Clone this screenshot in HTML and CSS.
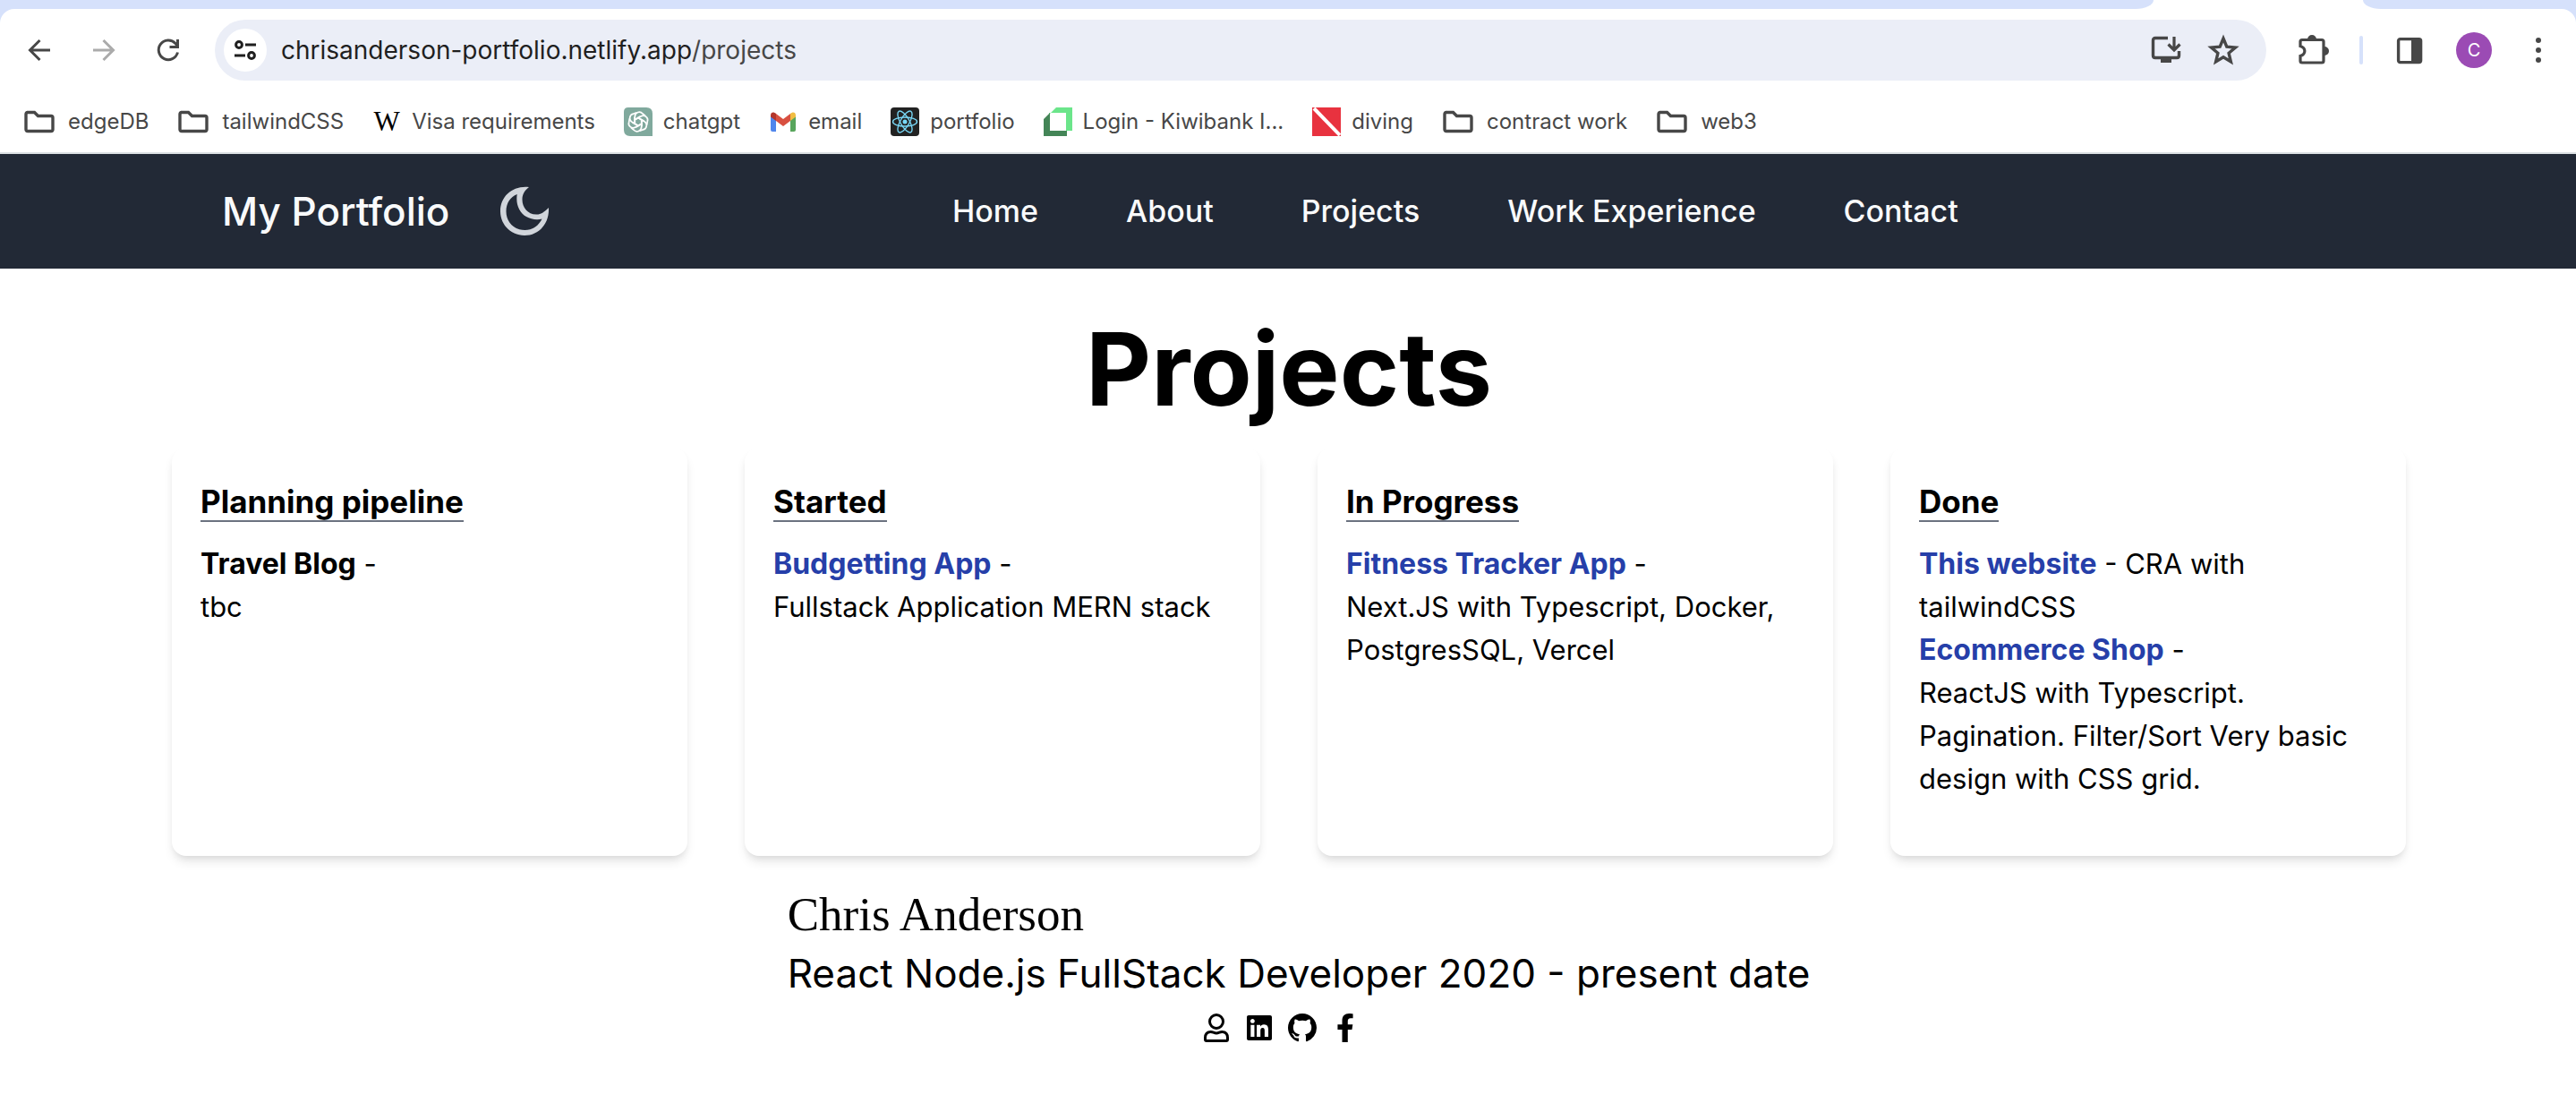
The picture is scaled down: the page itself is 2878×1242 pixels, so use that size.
FILE: index.html
```html
<!DOCTYPE html>
<html lang="en">
<head>
<meta charset="utf-8">
<title>Projects - My Portfolio</title>
<link rel="stylesheet" href="styles.css">
</head>
<body>
<svg width="0" height="0" class="sprite" aria-hidden="true">
  <symbol id="folder" viewBox="0 0 36 32"><path d="M4 5.500H12.500L16.500 9.500H31Q33 9.500 33 11.500V24.500Q33 26.500 31 26.500H5Q3 26.500 3 24.500V7.500Q3 5.500 5 5.500Z" fill="none" stroke="#474747" stroke-width="3.400"/></symbol>
</svg>
<div class="browser">
  <div class="tabstrip"><span class="tab-left"></span><span class="tab-right"></span></div>
  <div class="toolbar">
    <div class="history">
      <button class="tool" aria-label="Back"><svg width="32" height="32" viewBox="0 0 32 32"><path d="M28 16H6M16.500 5L5.500 16L16.500 27" fill="none" stroke="#474747" stroke-width="3"/></svg></button>
      <button class="tool" aria-label="Forward"><svg width="32" height="32" viewBox="0 0 32 32"><path d="M4 16H26M15.500 5L26.500 16L15.500 27" fill="none" stroke="#ababab" stroke-width="3"/></svg></button>
      <button class="tool" aria-label="Reload"><svg width="32" height="32" viewBox="0 0 32 32"><path d="M26.500 18.500A10.800 10.800 0 1 1 24 8.500L26 11" fill="none" stroke="#474747" stroke-width="3"/><path d="M28 4V14H17.500V11H25V4Z" fill="#474747"/></svg></button>
    </div>
    <div class="omnibox">
      <button class="site-info" aria-label="Site information"><svg width="28" height="28" viewBox="0 0 28 28" fill="none" stroke="#1f1f1f" stroke-width="3"><circle cx="7" cy="8" r="3.400"/><path d="M14 8H26M2 20H14"/><circle cx="21" cy="20" r="3.400"/></svg></button>
      <span class="url">chrisanderson-portfolio.netlify.app<span class="path">/projects</span></span>
      <div class="actions">
        <button class="tool" aria-label="Install"><svg width="36" height="36" viewBox="0 0 36 36"><path d="M20 4.500H6Q3.500 4.500 3.500 7V24Q3.500 26.500 6 26.500H30Q32.500 26.500 32.500 24V19" fill="none" stroke="#474747" stroke-width="3.400"/><path d="M12 26H24V32H12Z" fill="#474747"/><path d="M27 3V17M20.500 11.500L27 18L33.500 11.500" fill="none" stroke="#474747" stroke-width="3.200"/></svg></button>
        <button class="tool" aria-label="Bookmark"><svg width="36" height="36" viewBox="0 0 36 36"><path d="M18 5L21.800 14.200L31.500 15L24.100 21.300L26.400 31L18 25.800L9.600 31L11.900 21.300L4.500 15L14.200 14.200Z" fill="none" stroke="#474747" stroke-width="3.400"/></svg></button>
      </div>
    </div>
    <button class="tool" aria-label="Extensions"><svg width="40" height="40" viewBox="0 0 40 40"><path d="M8 8.500H30Q32 8.500 32 10.500V32Q32 34 30 34H8Q6 34 6 32V26.500C12.500 24.500 12.500 17.500 6 15.500V10.500Q6 8.500 8 8.500Z" fill="none" stroke="#474747" stroke-width="3.200"/><path d="M14 8A5 5 0 0 1 24 8ZM33 16A5 5 0 0 1 33 26Z" fill="#474747"/></svg></button>
    <span class="divider"></span>
    <button class="tool" aria-label="Side panel"><svg width="32" height="32" viewBox="0 0 32 32"><rect x="3.600" y="3.600" width="25" height="26" rx="2" fill="none" stroke="#474747" stroke-width="3.400"/><path d="M18 3H29V30H18Z" fill="#474747"/></svg></button>
    <button class="avatar" aria-label="Profile">C</button>
    <button class="tool" aria-label="Menu"><svg width="32" height="32" viewBox="0 0 32 32" fill="#474747"><circle cx="16" cy="5" r="3"/><circle cx="16" cy="16" r="3"/><circle cx="16" cy="27" r="3"/></svg></button>
  </div>
  <div class="bookmarks">
    <a href="#" class="folder"><svg width="36" height="32"><use href="#folder"/></svg>edgeDB</a>
    <a href="#" class="folder"><svg width="36" height="32"><use href="#folder"/></svg>tailwindCSS</a>
    <a href="#"><span class="wiki">W</span>Visa requirements</a>
    <a href="#"><svg width="32" height="32" viewBox="0 0 32 32"><path d="M5 0H25Q32 0 32 7V32H7Q0 32 0 25V5Q0 0 5 0Z" fill="#80a99d"/><g fill="none" stroke="#fff" stroke-width="1.700"><path id="petal" d="M12.300 19V10.500C12.300 5.500 18 3.500 21 7L24 9.500M12.500 13.500L18.500 10"/><use href="#petal" transform="rotate(60 16 16)"/><use href="#petal" transform="rotate(120 16 16)"/><use href="#petal" transform="rotate(180 16 16)"/><use href="#petal" transform="rotate(240 16 16)"/><use href="#petal" transform="rotate(300 16 16)"/></g></svg>chatgpt</a>
    <a href="#"><svg width="32" height="32" viewBox="0 0 32 32"><path d="M2 9V25Q2 27 4 27H8V14Z" fill="#5086ec"/><path d="M30 9V25Q30 27 28 27H24V14Z" fill="#58a55c"/><path d="M8 7L16 13L24 7V15L16 21L8 15Z" fill="#d85040"/><path d="M2 9C2 5 5.500 4.500 8 7V15L2 10.500Z" fill="#b3362b"/><path d="M30 9C30 5 26.500 4.500 24 7V15L30 10.500Z" fill="#f1bd42"/></svg>email</a>
    <a href="#"><svg width="32" height="32" viewBox="0 0 32 32"><rect width="32" height="32" rx="4" fill="#222"/><g fill="none" stroke="#79d8f7" stroke-width="1.400"><ellipse cx="16" cy="16" rx="13.500" ry="5"/><ellipse cx="16" cy="16" rx="13.500" ry="5" transform="rotate(60 16 16)"/><ellipse cx="16" cy="16" rx="13.500" ry="5" transform="rotate(120 16 16)"/></g><circle cx="16" cy="16" r="2.500" fill="#79d8f7"/></svg>portfolio</a>
    <a href="#"><svg width="32" height="32" viewBox="0 0 32 32"><path d="M14 0H32V26H25V6H6V8Z" fill="#6be58a"/><path d="M0 13L7 6V26H26V32H0Z" fill="#448557"/></svg>Login - Kiwibank I...</a>
    <a href="#"><svg width="32" height="32" viewBox="0 0 32 32"><path d="M0 0H32V32H0Z" fill="#e8323f"/><path d="M2 1L31 31" stroke="#fff" stroke-width="4"/></svg>diving</a>
    <a href="#" class="folder"><svg width="36" height="32"><use href="#folder"/></svg>contract work</a>
    <a href="#" class="folder"><svg width="36" height="32"><use href="#folder"/></svg>web3</a>
  </div>
</div>
<header class="navbar">
  <div class="brand">
    <a href="#">My Portfolio</a>
    <button class="theme" aria-label="Toggle dark mode"><svg width="64" height="64" viewBox="0 0 64 64"><path fill-rule="evenodd" d="M37 5C19 3 5 15 5 32C5 47 17 59 32 59C48 59 60 46 59 28C54 33 50 35.500 46 35.500C36 36 29.500 28 29.500 19C29.500 13 32 9 37 5ZM23.700 13C22 24 26 33 34 38C39 41 46 42 51.500 40.500C48 48 41 53 32.500 53C20 53 11.500 44 11.500 32C11.500 23 16 16 23.700 13Z" fill="#d1d5db"/></svg></button>
  </div>
  <nav>
    <a href="#">Home</a>
    <a href="#">About</a>
    <a href="#">Projects</a>
    <a href="#">Work Experience</a>
    <a href="#">Contact</a>
  </nav>
</header>
<main>
  <h1>Projects</h1>
  <div class="board">
    <section class="card">
      <h2><span>Planning pipeline</span></h2>
      <p><strong>Travel Blog</strong> -<br>tbc</p>
    </section>
    <section class="card">
      <h2><span>Started</span></h2>
      <p><a href="#">Budgetting App</a> -<br>Fullstack Application MERN stack</p>
    </section>
    <section class="card">
      <h2><span>In Progress</span></h2>
      <p><a href="#">Fitness Tracker App</a> -<br>Next.JS with Typescript, Docker, PostgresSQL, Vercel</p>
    </section>
    <section class="card">
      <h2><span>Done</span></h2>
      <p><a href="#">This website</a> - CRA with tailwindCSS</p>
      <p><a href="#">Ecommerce Shop</a> -<br>ReactJS with Typescript. Pagination. Filter/Sort Very basic design with CSS grid.</p>
    </section>
  </div>
</main>
<footer>
  <div class="about">
    <p class="name">Chris Anderson</p>
    <p>React Node.js FullStack Developer 2020 - present date</p>
  </div>
  <div class="social">
    <a href="#" aria-label="About me"><svg width="32" height="32" viewBox="0 0 32 32" fill="none" stroke="#000" stroke-width="3"><circle cx="16" cy="9" r="7.500"/><path d="M9 20.500C12 20 13 22 16 22S20 20 23 20.500C27 21 28.500 24 28.500 27V29Q28.500 30.500 27 30.500H5Q3.500 30.500 3.500 29V27C3.500 24 5 21 9 20.500Z"/></svg></a>
    <a href="#" aria-label="LinkedIn"><svg width="32" height="32" viewBox="0 0 448 512"><path d="M416 32H31.900C14.300 32 0 46.500 0 64.300v383.400C0 465.500 14.300 480 31.900 480H416c17.600 0 32-14.500 32-32.300V64.300c0-17.800-14.400-32.300-32-32.300zM135.400 416H69V202.200h66.500V416zm-33.200-243c-21.300 0-38.500-17.300-38.500-38.500S80.900 96 102.200 96c21.200 0 38.500 17.300 38.500 38.500 0 21.300-17.200 38.500-38.500 38.500zm282.100 243h-66.400V312c0-24.800-.5-56.700-34.500-56.700-34.600 0-39.900 27-39.900 54.900V416h-66.400V202.200h63.700v29.200h.9c8.900-16.800 30.600-34.500 62.900-34.500 67.200 0 79.700 44.300 79.700 101.900V416z"/></svg></a>
    <a href="#" aria-label="GitHub"><svg width="32" height="32" viewBox="0 0 16 16"><path d="M8 0C3.580 0 0 3.580 0 8c0 3.540 2.290 6.530 5.470 7.590.4.070.55-.17.55-.38 0-.19-.01-.82-.01-1.490-2.010.37-2.530-.49-2.690-.94-.09-.23-.48-.94-.82-1.130-.28-.15-.68-.52-.01-.53.63-.01 1.080.58 1.230.82.72 1.210 1.870.87 2.330.66.070-.52.28-.87.51-1.070-1.780-.2-3.640-.89-3.640-3.950 0-.87.31-1.590.82-2.150-.08-.2-.36-1.020.08-2.120 0 0 .67-.21 2.200.82.640-.18 1.320-.27 2-.27s1.360.09 2 .27c1.530-1.040 2.200-.82 2.200-.82.44 1.100.16 1.920.08 2.120.51.56.82 1.270.82 2.150 0 3.070-1.870 3.750-3.650 3.950.29.25.54.73.54 1.480 0 1.070-.01 1.930-.01 2.200 0 .21.15.46.55.38A8.010 8.010 0 0 0 16 8c0-4.420-3.580-8-8-8z"/></svg></a>
    <a href="#" aria-label="Facebook"><svg width="32" height="32" viewBox="0 0 320 512"><path d="M279.140 288l14.220-92.660h-88.910v-60.130c0-25.350 12.420-50.060 52.240-50.060h40.420V6.260S260.430 0 225.360 0c-73.220 0-121.080 44.380-121.080 124.720v70.620H22.890V288h81.390v224h100.170V288z"/></svg></a>
  </div>
</footer>
</body>
</html>
```
FILE: styles.css
```css
*, *::before, *::after { box-sizing: border-box; }
body { margin: 0; background: #fff; color: #000; font-family: Inter, "Liberation Sans", sans-serif; font-size: 31px; line-height: 48px; }
h1, h2, p { margin: 0; }
a { color: inherit; text-decoration: none; }
button { font: inherit; color: inherit; background: none; border: 0; padding: 0; cursor: pointer; }
svg { display: block; flex: none; }
.sprite { position: absolute; }

/* Browser chrome */
.browser { background: #d6e1fb; border-bottom: 2px solid #dce0e3; }
.tabstrip { height: 10px; background: #fff; display: flex; justify-content: space-between; }
.tab-left, .tab-right { background: #d6e1fb; }
.tab-left { flex: 0 1 2406px; border-bottom-right-radius: 20px 10px; }
.tab-right { flex: 0 1 238px; border-bottom-left-radius: 20px 10px; }
.toolbar { display: flex; align-items: center; gap: 36px; height: 92px; padding: 0 26px 0 28px; background: #fff; border-radius: 16px 16px 0 0; }
.history { display: flex; gap: 40px; }
.tool { display: flex; align-items: center; justify-content: center; width: 32px; }
.omnibox { flex: 1; display: flex; align-items: center; height: 68px; padding: 0 30px 0 10px; border-radius: 34px; background: #ebeef7; }
.site-info { display: flex; align-items: center; justify-content: center; width: 48px; height: 48px; border-radius: 50%; background: #fff; }
.url { flex: 1; margin-left: 16px; font-size: 28px; color: #1f1f1f; }
.path { color: #474747; }
.actions { display: flex; gap: 32px; padding: 0 2px; }
.divider { width: 4px; height: 32px; border-radius: 2px; background: #d6e1fb; }
.avatar { width: 40px; height: 40px; border-radius: 50%; background: #9b4bb4; color: #fff; font-size: 20px; line-height: 40px; }
.bookmarks { display: flex; align-items: center; gap: 32px; height: 68px; padding: 0 26px; background: #fff; color: #474747; font-size: 24px; line-height: 32px; white-space: nowrap; }
.bookmarks a { display: flex; align-items: center; gap: 12px; }
.bookmarks .folder { gap: 14px; }
.wiki { width: 32px; font-family: "Liberation Serif", serif; font-size: 31px; color: #000; text-align: center; }

/* Site */
.navbar { display: flex; align-items: center; height: 128px; padding-left: 248px; background: #222936; color: #f9fafb; font-weight: 500; }
.brand { display: flex; align-items: center; gap: 52px; flex: 0 0 816px; font-size: 44px; line-height: 64px; }
.theme { display: block; }
nav { display: flex; gap: 98px; font-size: 34px; line-height: 56px; white-space: nowrap; }

main { padding: 42px 190px 0 192px; }
h1 { padding-bottom: 18px; font-size: 113px; line-height: 140px; font-weight: 700; text-align: center; }
.board { display: grid; grid-template-columns: repeat(4, 1fr); gap: 64px; }
.card { padding: 32px 32px 62px; border-radius: 16px; background: #fff; box-shadow: 0 8px 12px -2px rgba(0, 0, 0, .1), 0 4px 8px -4px rgba(0, 0, 0, .1); }
h2 { margin-bottom: 18px; font-size: 35px; line-height: 56px; font-weight: 700; }
h2 span { border-bottom: 2px solid #6b7280; }
.card a, .card strong { font-size: 32px; line-height: 32px; font-weight: 700; }
.card a { color: #263fa9; }

footer { padding-top: 32px; }
.about { width: fit-content; margin: 0 auto; padding-left: 24px; font-size: 44px; line-height: 66px; }
.name { font-family: Georgia, "Liberation Serif", serif; font-size: 53px; }
.social { display: flex; justify-content: center; gap: 16px; padding: 12px 16px 0 0; }
```
